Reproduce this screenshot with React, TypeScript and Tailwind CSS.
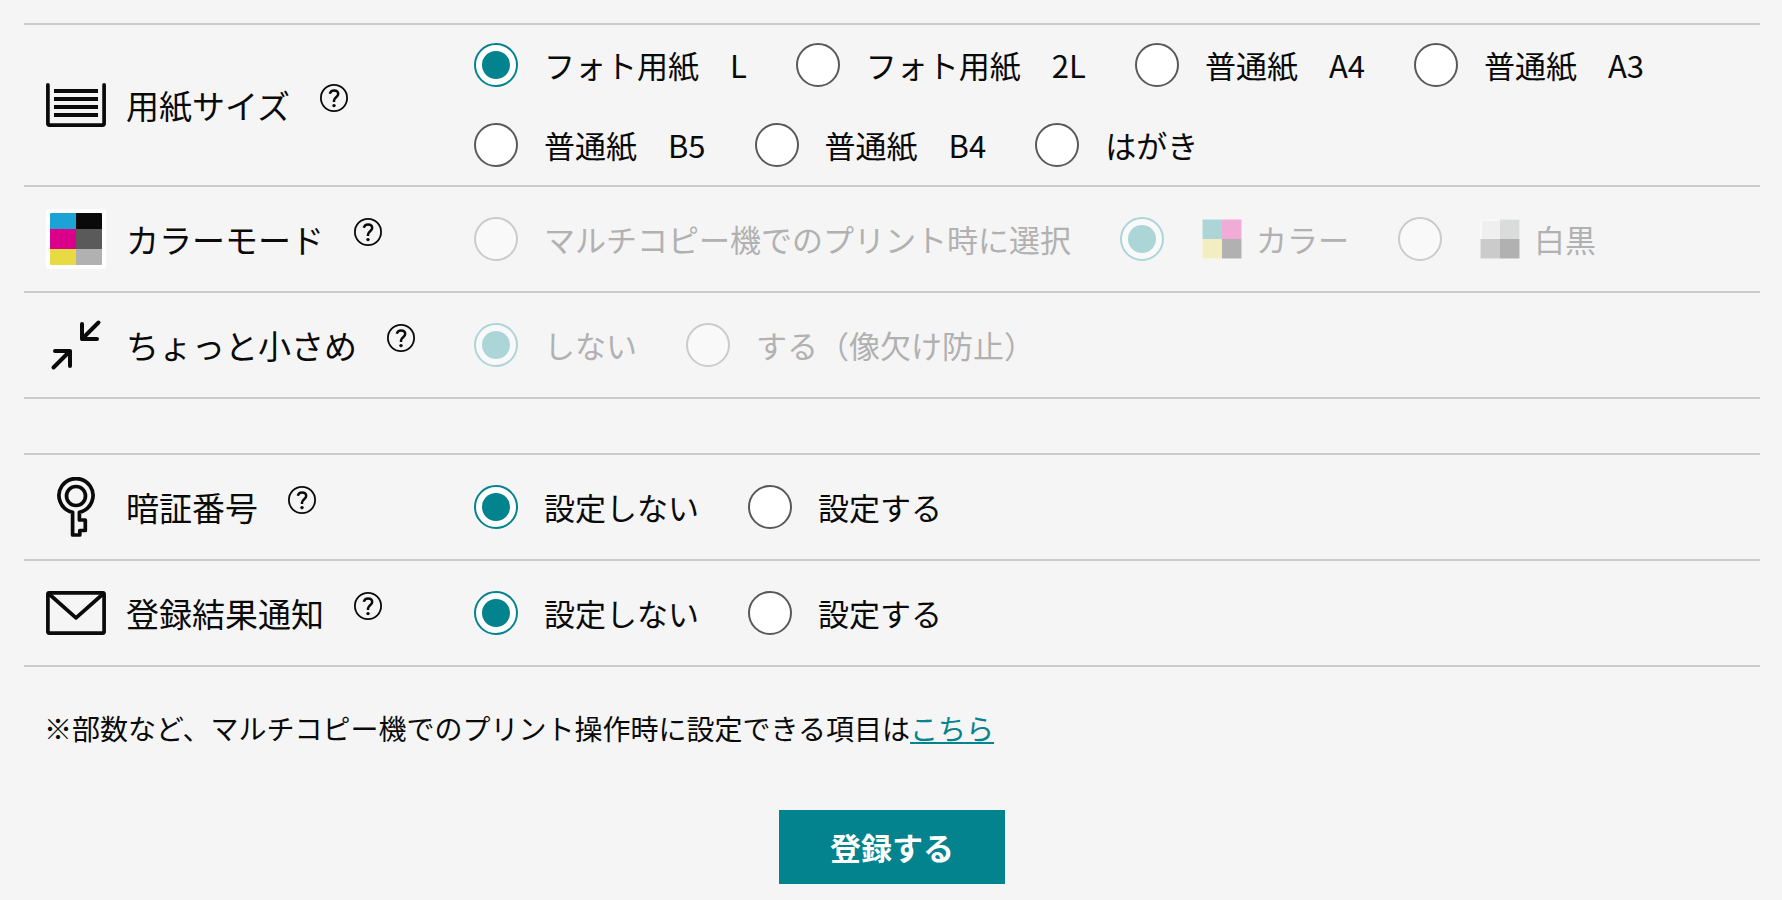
import React, { useState } from "react";

type Option = { value: string; label: string; icon?: React.ReactNode };

function PaperIcon() {
  return (
    <svg viewBox="0 0 60 60" className="size-[60px]" fill="none" stroke="currentColor" aria-hidden="true">
      <path d="M1.900 9.800V48.500Q1.900 50.100 3.500 50.100H56.500Q58.100 50.100 58.100 48.500V9.800" strokeWidth="3.700" strokeLinecap="round" strokeLinejoin="round" />
      <path d="M8 16H52M8 24H52M8 32H52M8 40H52" strokeWidth="4" />
    </svg>
  );
}

function ColorModeIcon() {
  return (
    <svg viewBox="0 0 60 60" className="size-[60px]" aria-hidden="true">
      <rect width="60" height="60" rx="3" fill="#fff" />
      <path d="M4 20V5Q4 4 5 4H30V20Z" fill="#1aa3d4" />
      <path d="M30 4H55Q56 4 56 5V20H30Z" fill="#0a0a0a" />
      <path d="M4 20H30V40H4Z" fill="#db008b" />
      <path d="M30 20H56V40H30Z" fill="#5a5a5a" />
      <path d="M4 40H30V56H5Q4 56 4 55Z" fill="#e8da43" />
      <path d="M30 40H56V55Q56 56 55 56H30Z" fill="#b1b1b1" />
    </svg>
  );
}

function ShrinkIcon() {
  return (
    <svg viewBox="0 0 60 60" className="size-[60px]" fill="none" stroke="currentColor" strokeWidth="4" strokeLinecap="round" strokeLinejoin="round" aria-hidden="true">
      <path d="M52.500 7.500L36 24M36 9V24H51" />
      <path d="M7.500 52.500L24 36M9 36H24V51" />
    </svg>
  );
}

function KeyIcon() {
  return (
    <svg viewBox="0 0 60 60" className="size-[60px]" fill="none" stroke="currentColor" strokeWidth="3.700" strokeLinejoin="round" aria-hidden="true">
      <circle cx="30" cy="19" r="9.500" />
      <path d="M26.600 35.200A17 17 0 1 1 33.400 35.200V43H39.300V53.500H33.800V58H26.600Z" />
    </svg>
  );
}

function MailIcon() {
  return (
    <svg viewBox="0 0 60 60" className="size-[60px]" fill="none" stroke="currentColor" strokeWidth="3.700" strokeLinecap="round" strokeLinejoin="round" aria-hidden="true">
      <rect x="1.900" y="9.900" width="56.200" height="40.200" rx="1.500" />
      <path d="M2.500 10.500L30 34.800L57.500 10.500" />
    </svg>
  );
}

function HelpIcon() {
  return (
    <svg viewBox="0 0 28 28" className="size-7" fill="none" stroke="currentColor" aria-hidden="true">
      <circle cx="14" cy="14" r="13.100" strokeWidth="1.800" />
      <path d="M9.800 9.800C10.400 7.500 12 6.500 14 6.500C16.500 6.500 18.200 7.900 18.200 10C18.200 13 14 13.400 14 16.600V18" strokeWidth="2.500" />
      <circle cx="14" cy="21.600" r="1.700" fill="currentColor" stroke="none" />
    </svg>
  );
}

function ColorSwatch() {
  return (
    <svg viewBox="0 0 40 40" className="size-10" aria-hidden="true">
      <rect width="40" height="40" rx="2" fill="#f9f9f9" />
      <path d="M.5 .5H20V20H.5Z" fill="#acd5d8" />
      <path d="M20 .5H39.500V20H20Z" fill="#f0abd7" />
      <path d="M.5 20H20V39.500H.5Z" fill="#f2eec0" />
      <path d="M20 20H39.500V39.500H20Z" fill="#b1b1b1" />
    </svg>
  );
}

function MonoSwatch() {
  return (
    <svg viewBox="0 0 40 40" className="size-10" aria-hidden="true">
      <rect width="40" height="40" rx="2" fill="#f9f9f9" />
      <path d="M2 2H20V20H2Z" fill="#efefef" />
      <path d="M20 .5H39.500V20H20Z" fill="#dadcdb" />
      <path d="M.5 20H20V39.500H.5Z" fill="#cbcbcb" />
      <path d="M20 20H39.500V39.500H20Z" fill="#b1b1b1" />
    </svg>
  );
}

function SettingRow({
  name,
  title,
  icon,
  options,
  initial,
  disabled = false,
}: {
  name: string;
  title: string;
  icon: React.ReactNode;
  options: Option[];
  initial: string;
  disabled?: boolean;
}) {
  const [value, setValue] = useState(initial);
  return (
    <div role="radiogroup" aria-labelledby={`${name}-title`} className="flex items-center border-b-2 border-[#cbcbcb] pl-[22px]">
      <div className="flex w-[428px] shrink-0 items-center">
        {icon}
        <h2 id={`${name}-title`} className="ml-5 text-[33px] leading-[44px]">
          {title}
        </h2>
        <button type="button" aria-label={`${title}のヘルプ`} className="mb-3.5 ml-[30px]">
          <HelpIcon />
        </button>
      </div>
      <div className={`flex flex-1 flex-wrap gap-y-9 ${options.length > 4 ? "py-[18px]" : "py-[30px]"}`}>
        {options.map((option) => (
          <label key={option.value} className={`mr-[49px] flex items-center ${disabled ? "text-[#b1b1b1]" : ""}`}>
            <input
              type="radio"
              name={name}
              value={option.value}
              checked={value === option.value}
              onChange={() => setValue(option.value)}
              disabled={disabled}
              className="mr-[26px] grid size-11 shrink-0 appearance-none place-items-center rounded-full border-2 border-[#595959] bg-white checked:border-[#03838e] checked:before:size-7 checked:before:rounded-full checked:before:bg-[#03838e] disabled:border-[#cbcbcb] disabled:bg-[#f9f9f9] disabled:checked:border-[#acd5d8] disabled:checked:before:bg-[#acd5d8]"
            />
            {option.icon && <span className="mr-3.5 ml-3">{option.icon}</span>}
            <span className="text-[31px] leading-[44px] whitespace-nowrap">{option.label}</span>
          </label>
        ))}
      </div>
    </div>
  );
}

const paperSizes: Option[] = [
  { value: "photo-l", label: "フォト用紙　L" },
  { value: "photo-2l", label: "フォト用紙　2L" },
  { value: "a4", label: "普通紙　A4" },
  { value: "a3", label: "普通紙　A3" },
  { value: "b5", label: "普通紙　B5" },
  { value: "b4", label: "普通紙　B4" },
  { value: "postcard", label: "はがき" },
];

const colorModes: Option[] = [
  { value: "later", label: "マルチコピー機でのプリント時に選択" },
  { value: "color", label: "カラー", icon: <ColorSwatch /> },
  { value: "mono", label: "白黒", icon: <MonoSwatch /> },
];

const shrinkModes: Option[] = [
  { value: "off", label: "しない" },
  { value: "on", label: "する（像欠け防止）" },
];

const toggles: Option[] = [
  { value: "off", label: "設定しない" },
  { value: "on", label: "設定する" },
];

export default function App() {
  return (
    <main className="min-h-screen bg-[#f5f5f5] pt-[23px] pr-[22px] pb-4 pl-6 font-['Noto_Sans_CJK_JP',sans-serif] text-[#0a0a0a]">
      <form onSubmit={(event) => event.preventDefault()}>
        <section className="border-t-2 border-[#cbcbcb]">
          <SettingRow name="paper" title="用紙サイズ" icon={<PaperIcon />} options={paperSizes} initial="photo-l" />
          <SettingRow name="color" title="カラーモード" icon={<ColorModeIcon />} options={colorModes} initial="color" disabled />
          <SettingRow name="shrink" title="ちょっと小さめ" icon={<ShrinkIcon />} options={shrinkModes} initial="off" disabled />
        </section>
        <section className="mt-[54px] border-t-2 border-[#cbcbcb]">
          <SettingRow name="pin" title="暗証番号" icon={<KeyIcon />} options={toggles} initial="off" />
          <SettingRow name="notice" title="登録結果通知" icon={<MailIcon />} options={toggles} initial="off" />
        </section>
        <p className="mt-[39px] pl-5 text-[28px] leading-[44px]">
          ※部数など、マルチコピー機でのプリント操作時に設定できる項目は
          <a href="#items" className="text-[#03838e] underline decoration-2 underline-offset-2">
            こちら
          </a>
        </p>
        <div className="mt-[60px] flex justify-center">
          <button type="submit" className="h-[74px] bg-[#03838e] px-[51px] text-[31px] leading-[44px] font-bold text-white">
            登録する
          </button>
        </div>
      </form>
    </main>
  );
}
